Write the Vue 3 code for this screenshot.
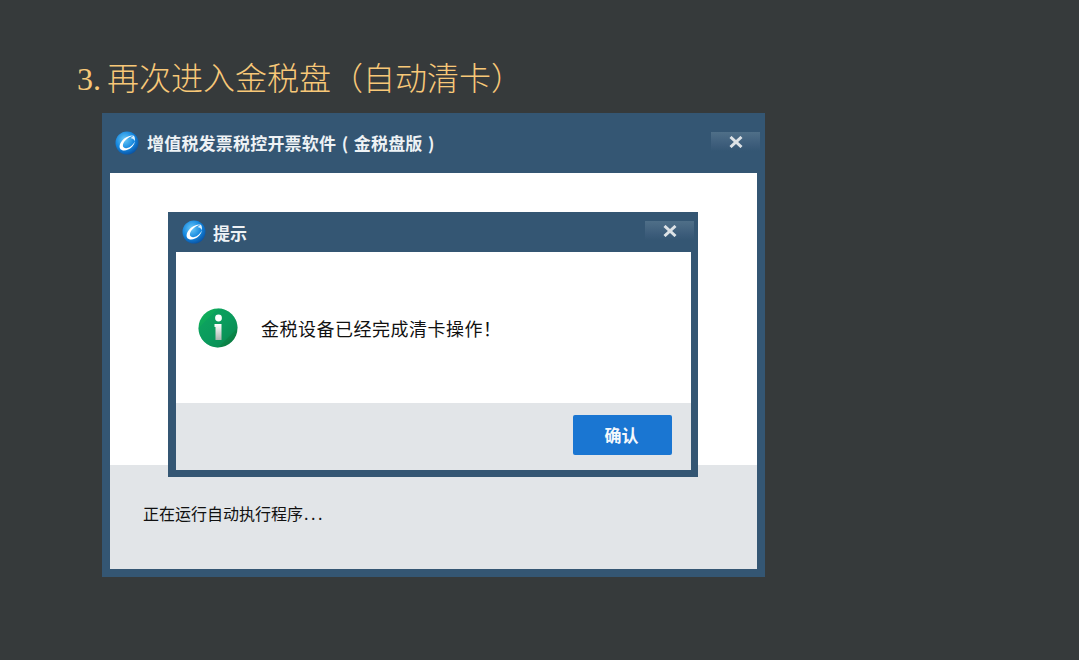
<template>
  <div class="slide">
    <h1 class="heading"><span class="num">3.</span> 再次进入金税盘（自动清卡）</h1>
    <div class="window">
      <div class="titlebar">
        <svg class="logo" viewBox="0 0 24 24">
          <use href="#app-logo" />
        </svg>
        <span class="title-text main">增值税发票税控开票软件 ( 金税盘版 )</span>
        <button class="close">
          <svg viewBox="0 0 14 12" width="14" height="12">
            <path d="M1.5 1 L12.5 11 M12.5 1 L1.5 11" stroke="#dde2e6" stroke-width="3" fill="none" />
          </svg>
        </button>
      </div>
      <div class="window-body"></div>
      <div class="window-foot">正在运行自动执行程序<span class="dots">...</span></div>

      <div class="dialog">
        <div class="dialog-bar">
          <svg class="logo" viewBox="0 0 24 24">
            <use href="#app-logo" />
          </svg>
          <span class="title-text">提示</span>
          <button class="close">
            <svg viewBox="0 0 14 12" width="14" height="12">
              <path d="M1.5 1 L12.5 11 M12.5 1 L1.5 11" stroke="#dde2e6" stroke-width="3" fill="none" />
            </svg>
          </button>
        </div>
        <div class="dialog-body">
          <svg class="info" viewBox="0 0 40 40">
            <defs>
              <linearGradient id="info-bg" x1="0" y1="0" x2="1" y2="1">
                <stop offset="0" stop-color="#12b45c" />
                <stop offset="0.55" stop-color="#0b9a58" />
                <stop offset="1" stop-color="#0a6f38" />
              </linearGradient>
              <linearGradient id="info-i" x1="0" y1="0" x2="0" y2="1">
                <stop offset="0" stop-color="#ffffff" />
                <stop offset="1" stop-color="#aab5af" />
              </linearGradient>
            </defs>
            <circle cx="20" cy="20" r="19.5" fill="url(#info-bg)" />
            <path d="M20 0.5 A19.5 19.5 0 0 1 39.5 20 L20 39.5 A19.5 19.5 0 0 1 0.5 20 Z" fill="#0a9a62" opacity="0.5" />
            <circle cx="20.5" cy="10" r="3.4" fill="#fff" />
            <path d="M16.5 16 H23.5 V32 H17.5 V19 H16.5 Z" fill="url(#info-i)" />
          </svg>
          <span class="message">金税设备已经完成清卡操作！</span>
        </div>
        <div class="dialog-foot">
          <button class="confirm">确认</button>
        </div>
      </div>
    </div>

    <svg class="defs" width="0" height="0">
      <defs>
        <radialGradient id="logo-bg" cx="0.4" cy="0.35" r="0.7">
          <stop offset="0" stop-color="#6ccaf7" />
          <stop offset="0.6" stop-color="#1285de" />
          <stop offset="1" stop-color="#0a4f9e" />
        </radialGradient>
        <g id="app-logo">
          <circle cx="12" cy="12" r="11.5" fill="url(#logo-bg)" />
          <path d="M18.5 4.5 C12 4 5.2 9.5 4.6 15 C4.2 19.5 9 20.4 13 18.6 C16.5 17 19.4 13.6 19.8 10.4 C18.6 13.2 15.6 16.2 12.2 17 C9 17.7 7.4 16.2 8 13.6 C8.8 10 13.4 6 18.5 4.5 Z" fill="#fff" />
          <path d="M18.5 4.5 C20 5.6 20.2 8 19.8 10.4 C19.4 8.4 18 7.4 15.6 7.2 Z" fill="#d5eefc" />
        </g>
      </defs>
    </svg>
  </div>
</template>

<script setup>
</script>

<style>
html, body {
  margin: 0;
  background: #363a3b;
}
</style>

<style scoped>
.slide {
  width: 1079px;
  height: 660px;
  padding: 54px 0 0 77px;
  box-sizing: border-box;
  background: #363a3b;
  overflow: hidden;
  font-family: "Noto Sans CJK SC", sans-serif;
}
.heading {
  margin: 0 0 15px;
  height: 44px;
  line-height: 44px;
  font-size: 32px;
  font-weight: 300;
  color: #f8c878;
  white-space: nowrap;
}
.num {
  font-family: "Liberation Serif", serif;
  margin-right: -1px;
}
.window {
  position: relative;
  width: 663px;
  height: 464px;
  margin-left: 25px;
  box-sizing: border-box;
  border: 8px solid #345673;
  border-top: 0;
  display: flex;
  flex-direction: column;
  background: #345673;
}
.titlebar {
  height: 60px;
  flex: none;
  display: flex;
  align-items: center;
  box-sizing: border-box;
  padding-left: 5px;
}
.logo {
  width: 24px;
  height: 24px;
  flex: none;
}
.title-text {
  margin-left: 7px;
  font-size: 17px;
  font-weight: 700;
  color: #eef2f5;
  white-space: pre;
}
.title-text.main {
  margin-left: 8px;
  margin-top: -2px;
  letter-spacing: 0.2px;
  word-spacing: 1.4px;
}
.close {
  margin-left: auto;
  margin-right: -3px;
  margin-top: -3px;
  width: 49px;
  height: 19px;
  padding: 0;
  border: 0;
  display: flex;
  align-items: center;
  justify-content: center;
  background: linear-gradient(#4f6f88, #3c5c7a 70%, #345673);
}
.window-body {
  height: 292px;
  flex: none;
  background: #fff;
}
.window-foot {
  flex: 1;
  background: #e2e5e8;
  padding: 36px 0 0 33px;
  font-size: 16px;
  line-height: 24px;
  color: #111;
}
.dots {
  letter-spacing: 2.6px;
  margin-left: 1px;
}
.dialog {
  position: absolute;
  left: 58px;
  top: 99px;
  width: 530px;
  height: 265px;
  box-sizing: border-box;
  border: solid #345673;
  border-width: 0 7px 7px 8px;
  display: flex;
  flex-direction: column;
}
.dialog-bar {
  height: 40px;
  flex: none;
  display: flex;
  align-items: center;
  background: #345673;
  padding-left: 6px;
}
.dialog-body {
  flex: 1;
  background: #fff;
  display: flex;
  align-items: center;
  padding-left: 22px;
}
.info {
  width: 40px;
  height: 40px;
  flex: none;
}
.message {
  margin-left: 23px;
  font-size: 18px;
  letter-spacing: 0.5px;
  color: #111;
}
.dialog-foot {
  height: 67px;
  flex: none;
  background: #e2e5e8;
  display: flex;
  justify-content: flex-end;
  align-items: flex-start;
  padding: 12px 19px 0 0;
  box-sizing: border-box;
}
.confirm {
  width: 99px;
  height: 40px;
  padding: 0 2px 2px 0;
  border: 0;
  border-radius: 2px;
  background: #1a76d2;
  color: #f4f8fc;
  font-family: inherit;
  font-size: 17px;
  font-weight: 700;
}
.defs {
  position: absolute;
}
</style>
